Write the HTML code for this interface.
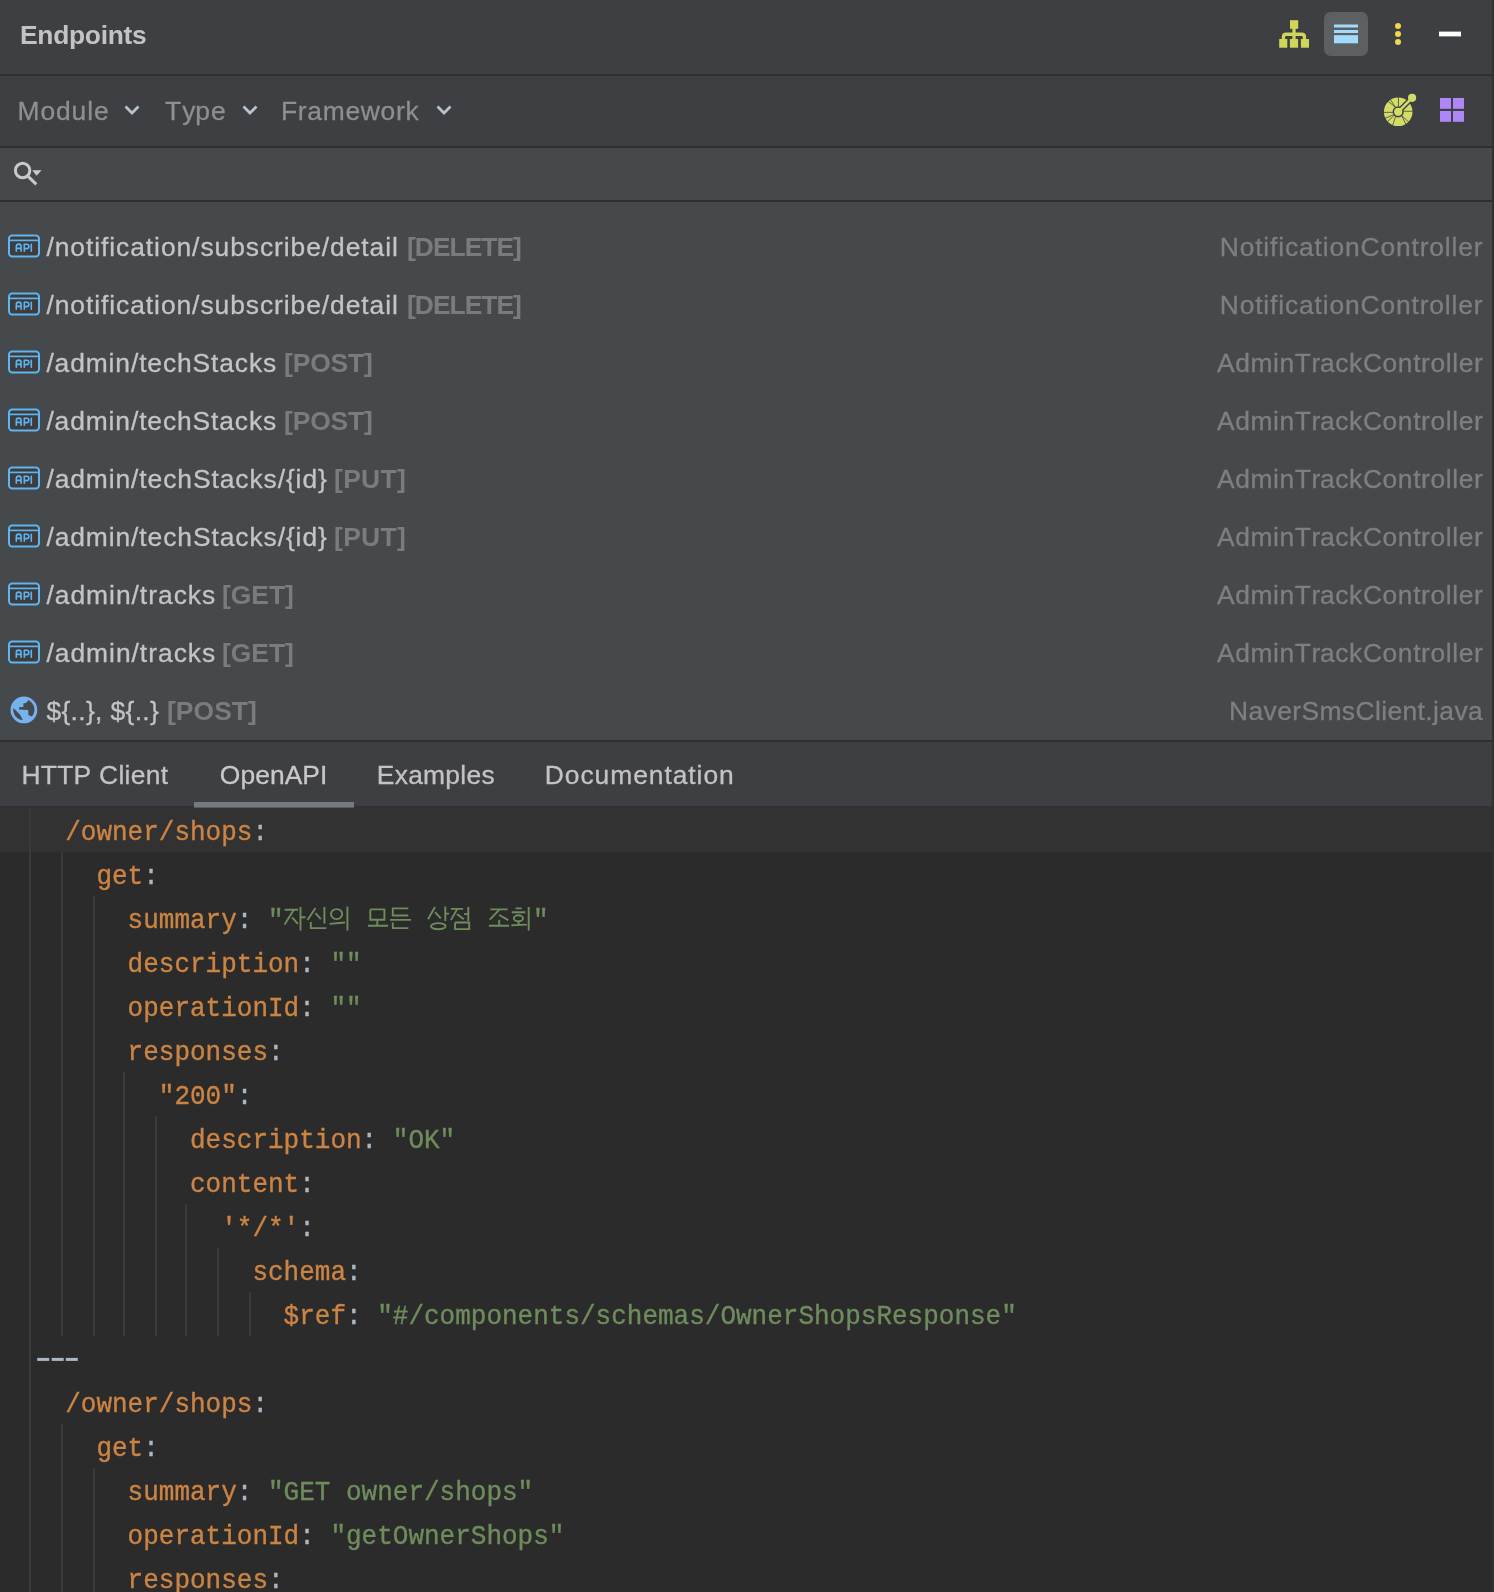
<!DOCTYPE html>
<html><head><meta charset="utf-8">
<style>
html,body{margin:0;padding:0;}
body{width:1494px;height:1592px;position:relative;overflow:hidden;background:#2b2b2b;}
svg{position:absolute;overflow:visible;}
#main{left:0;top:0;will-change:transform;}
#main text{font-family:'Liberation Sans', sans-serif;}
#main text.m{font-family:'Liberation Mono', monospace;font-size:26px;stroke-width:0.35px;}
</style></head><body>
<svg id="main" width="1494" height="1592" viewBox="0 0 1494 1592">
<rect x="0" y="0" width="1494" height="74" fill="#3d3f42"/>
<rect x="0" y="74" width="1494" height="2" fill="#2f2f30"/>
<rect x="0" y="76" width="1494" height="70" fill="#3d3f42"/>
<rect x="0" y="146" width="1494" height="2" fill="#2f2f30"/>
<rect x="0" y="148" width="1494" height="52" fill="#45494b"/>
<rect x="0" y="200" width="1494" height="2" fill="#2f2f30"/>
<rect x="0" y="202" width="1494" height="538" fill="#46494c"/>
<rect x="0" y="740" width="1494" height="2" fill="#2f2f30"/>
<rect x="0" y="742" width="1494" height="64" fill="#3d3f42"/>
<rect x="0" y="806" width="1494" height="786" fill="#2b2b2b"/>
<rect x="0" y="806" width="1494" height="46" fill="#323232"/>
<rect x="194" y="802" width="160" height="5.6" fill="#757a82"/>
<rect x="1492" y="0" width="2" height="1592" fill="#313131"/>
<g fill="#3a3a3a"><rect x="29" y="808" width="2" height="784"/><rect x="61" y="852" width="2" height="484"/><rect x="93" y="896" width="2" height="440"/><rect x="123" y="1072" width="2" height="264"/><rect x="155" y="1116" width="2" height="220"/><rect x="185" y="1204" width="2" height="132"/><rect x="217" y="1248" width="2" height="88"/><rect x="249" y="1292" width="2" height="44"/><rect x="61" y="1424" width="2" height="168"/><rect x="93" y="1468" width="2" height="124"/></g>
<text x="20.00 37.31 53.14 68.97 84.80 100.63 107.67 123.50 132.00" y="44" font-size="26.4" font-weight="700" fill="#c3c3c3">Endpoints</text><text x="17.50 40.41 56.01 71.61 87.21 94.00" y="120" font-size="26.4" font-weight="400" fill="#8f8f8f" stroke="#8f8f8f" stroke-width="0.3">Module</text><text x="165.00 182.28 195.17 211.00" y="120" font-size="26.4" font-weight="400" fill="#8f8f8f" stroke="#8f8f8f" stroke-width="0.3">Type</text><text x="281.00 297.84 307.34 322.73 345.43 360.83 380.60 396.00 405.50" y="120" font-size="26.4" font-weight="400" fill="#8f8f8f" stroke="#8f8f8f" stroke-width="0.3">Framework</text><text x="46.40 54.67 70.29 85.91 94.18 100.98 109.25 116.06 130.19 145.81 154.08 160.89 176.50 192.12 200.39 214.53 230.15 245.76 259.90 274.03 283.76 290.57 306.18 321.80 330.07 345.69 361.31 369.58 385.20 392.00" y="256" font-size="26.4" font-weight="400" fill="#c4c4c4" stroke="#c4c4c4" stroke-width="0.3">/notification/subscribe/detail</text><text x="407.00 414.80 432.88 449.49 464.63 481.25 496.38 513.00" y="256" font-size="26.4" font-weight="700" fill="#7b7b7b">[DELETE]</text><text x="1219.75 1239.66 1255.19 1263.37 1270.09 1278.27 1284.99 1299.03 1314.56 1322.75 1329.46 1344.99 1360.52 1380.43 1395.96 1411.49 1419.67 1429.31 1444.84 1451.56 1458.27 1473.80" y="256" font-size="26.4" font-weight="400" fill="#7f7f7f" stroke="#7f7f7f" stroke-width="0.3">NotificationController</text><text x="46.40 54.67 70.29 85.91 94.18 100.98 109.25 116.06 130.19 145.81 154.08 160.89 176.50 192.12 200.39 214.53 230.15 245.76 259.90 274.03 283.76 290.57 306.18 321.80 330.07 345.69 361.31 369.58 385.20 392.00" y="314" font-size="26.4" font-weight="400" fill="#c4c4c4" stroke="#c4c4c4" stroke-width="0.3">/notification/subscribe/detail</text><text x="407.00 414.80 432.88 449.49 464.63 481.25 496.38 513.00" y="314" font-size="26.4" font-weight="700" fill="#7b7b7b">[DELETE]</text><text x="1219.75 1239.66 1255.19 1263.37 1270.09 1278.27 1284.99 1299.03 1314.56 1322.75 1329.46 1344.99 1360.52 1380.43 1395.96 1411.49 1419.67 1429.31 1444.84 1451.56 1458.27 1473.80" y="314" font-size="26.4" font-weight="400" fill="#7f7f7f" stroke="#7f7f7f" stroke-width="0.3">NotificationController</text><text x="46.40 54.62 70.18 85.74 108.61 115.36 130.93 139.14 147.36 162.92 177.01 192.57 211.06 219.27 234.84 248.92 263.00" y="372" font-size="26.4" font-weight="400" fill="#c4c4c4" stroke="#c4c4c4" stroke-width="0.3">/admin/techStacks</text><text x="284.00 292.66 310.13 330.53 348.01 364.00" y="372" font-size="26.4" font-weight="700" fill="#7b7b7b">[POST]</text><text x="1217.00 1235.21 1250.50 1273.09 1279.57 1294.85 1311.58 1320.00 1335.29 1349.09 1362.90 1382.57 1397.85 1413.14 1421.08 1430.48 1445.77 1452.24 1458.71 1474.00" y="372" font-size="26.4" font-weight="400" fill="#7f7f7f" stroke="#7f7f7f" stroke-width="0.3">AdminTrackController</text><text x="46.40 54.62 70.18 85.74 108.61 115.36 130.93 139.14 147.36 162.92 177.01 192.57 211.06 219.27 234.84 248.92 263.00" y="430" font-size="26.4" font-weight="400" fill="#c4c4c4" stroke="#c4c4c4" stroke-width="0.3">/admin/techStacks</text><text x="284.00 292.66 310.13 330.53 348.01 364.00" y="430" font-size="26.4" font-weight="700" fill="#7b7b7b">[POST]</text><text x="1217.00 1235.21 1250.50 1273.09 1279.57 1294.85 1311.58 1320.00 1335.29 1349.09 1362.90 1382.57 1397.85 1413.14 1421.08 1430.48 1445.77 1452.24 1458.71 1474.00" y="430" font-size="26.4" font-weight="400" fill="#7f7f7f" stroke="#7f7f7f" stroke-width="0.3">AdminTrackController</text><text x="46.40 54.65 70.25 85.84 108.74 115.53 131.12 139.37 147.62 163.22 177.33 192.93 211.45 219.70 235.30 249.41 263.52 277.64 285.89 295.62 302.40 318.00" y="488" font-size="26.4" font-weight="400" fill="#c4c4c4" stroke="#c4c4c4" stroke-width="0.3">/admin/techStacks/{id}</text><text x="334.00 343.15 361.11 380.52 397.00" y="488" font-size="26.4" font-weight="700" fill="#7b7b7b">[PUT]</text><text x="1217.00 1235.21 1250.50 1273.09 1279.57 1294.85 1311.58 1320.00 1335.29 1349.09 1362.90 1382.57 1397.85 1413.14 1421.08 1430.48 1445.77 1452.24 1458.71 1474.00" y="488" font-size="26.4" font-weight="400" fill="#7f7f7f" stroke="#7f7f7f" stroke-width="0.3">AdminTrackController</text><text x="46.40 54.65 70.25 85.84 108.74 115.53 131.12 139.37 147.62 163.22 177.33 192.93 211.45 219.70 235.30 249.41 263.52 277.64 285.89 295.62 302.40 318.00" y="546" font-size="26.4" font-weight="400" fill="#c4c4c4" stroke="#c4c4c4" stroke-width="0.3">/admin/techStacks/{id}</text><text x="334.00 343.15 361.11 380.52 397.00" y="546" font-size="26.4" font-weight="700" fill="#7b7b7b">[PUT]</text><text x="1217.00 1235.21 1250.50 1273.09 1279.57 1294.85 1311.58 1320.00 1335.29 1349.09 1362.90 1382.57 1397.85 1413.14 1421.08 1430.48 1445.77 1452.24 1458.71 1474.00" y="546" font-size="26.4" font-weight="400" fill="#7f7f7f" stroke="#7f7f7f" stroke-width="0.3">AdminTrackController</text><text x="46.40 54.72 70.39 86.05 109.03 115.88 131.55 139.87 148.19 157.96 173.63 187.82 202.00" y="604" font-size="26.4" font-weight="400" fill="#c4c4c4" stroke="#c4c4c4" stroke-width="0.3">/admin/tracks</text><text x="222.00 230.78 251.30 268.89 285.00" y="604" font-size="26.4" font-weight="700" fill="#7b7b7b">[GET]</text><text x="1217.00 1235.21 1250.50 1273.09 1279.57 1294.85 1311.58 1320.00 1335.29 1349.09 1362.90 1382.57 1397.85 1413.14 1421.08 1430.48 1445.77 1452.24 1458.71 1474.00" y="604" font-size="26.4" font-weight="400" fill="#7f7f7f" stroke="#7f7f7f" stroke-width="0.3">AdminTrackController</text><text x="46.40 54.72 70.39 86.05 109.03 115.88 131.55 139.87 148.19 157.96 173.63 187.82 202.00" y="662" font-size="26.4" font-weight="400" fill="#c4c4c4" stroke="#c4c4c4" stroke-width="0.3">/admin/tracks</text><text x="222.00 230.78 251.30 268.89 285.00" y="662" font-size="26.4" font-weight="700" fill="#7b7b7b">[GET]</text><text x="1217.00 1235.21 1250.50 1273.09 1279.57 1294.85 1311.58 1320.00 1335.29 1349.09 1362.90 1382.57 1397.85 1413.14 1421.08 1430.48 1445.77 1452.24 1458.71 1474.00" y="662" font-size="26.4" font-weight="400" fill="#7f7f7f" stroke="#7f7f7f" stroke-width="0.3">AdminTrackController</text><text x="46.40 61.42 70.58 78.26 85.94 95.10 102.78 110.46 125.48 134.64 142.32 150.00" y="720" font-size="26.4" font-weight="400" fill="#c4c4c4" stroke="#c4c4c4" stroke-width="0.3">${..}, ${..}</text><text x="167.00 175.86 193.53 214.13 231.81 248.00" y="720" font-size="26.4" font-weight="700" fill="#7b7b7b">[POST]</text><text x="1229.00 1248.46 1263.54 1277.14 1292.23 1301.42 1319.43 1341.81 1355.41 1374.88 1381.15 1387.41 1402.50 1417.58 1425.31 1433.05 1439.32 1454.40 1468.00" y="720" font-size="26.4" font-weight="400" fill="#7f7f7f" stroke="#7f7f7f" stroke-width="0.3">NaverSmsClient.java</text><text x="21.40 40.75 57.16 73.58 91.47 99.10 118.45 124.60 130.76 145.73 160.70" y="784.3" font-size="26.4" font-weight="400" fill="#c3c3c3" stroke="#c3c3c3" stroke-width="0.3">HTTP Client</text><text x="219.80 240.40 255.15 269.90 284.65 302.32 320.00" y="784.3" font-size="26.4" font-weight="400" fill="#c8c8c8" stroke="#c8c8c8" stroke-width="0.3">OpenAPI</text><text x="376.80 394.68 408.15 423.10 445.36 460.31 466.45 481.40" y="784.3" font-size="26.4" font-weight="400" fill="#c3c3c3" stroke="#c3c3c3" stroke-width="0.3">Examples</text><text x="544.80 564.81 580.43 594.57 610.20 633.13 648.75 664.38 672.66 688.28 696.56 703.38 719.00" y="784.3" font-size="26.4" font-weight="400" fill="#c3c3c3" stroke="#c3c3c3" stroke-width="0.3">Documentation</text>
<g transform="translate(0 840) scale(1 1.08) translate(0 -840)"><text y="840" class="m"><tspan x="65.20 80.80 96.40 112.00 127.60 143.20 158.80 174.40 190.00 205.60 221.20 236.80" fill="#cc8444" stroke="#cc8444">/owner/shops</tspan><tspan x="252.40" fill="#a9b7c6" stroke="#a9b7c6">:</tspan></text></g><g transform="translate(0 884) scale(1 1.08) translate(0 -884)"><text y="884" class="m"><tspan x="96.40 112.00 127.60" fill="#cc8444" stroke="#cc8444">get</tspan><tspan x="143.20" fill="#a9b7c6" stroke="#a9b7c6">:</tspan></text></g><g transform="translate(0 928) scale(1 1.08) translate(0 -928)"><text y="928" class="m"><tspan x="127.60 143.20 158.80 174.40 190.00 205.60 221.20" fill="#cc8444" stroke="#cc8444">summary</tspan><tspan x="236.80" fill="#a9b7c6" stroke="#a9b7c6">:</tspan><tspan x="268.00" fill="#6f8c5d" stroke="#6f8c5d">&quot;</tspan><tspan x="532.90" fill="#6f8c5d" stroke="#6f8c5d">&quot;</tspan></text></g><g transform="translate(0 972) scale(1 1.08) translate(0 -972)"><text y="972" class="m"><tspan x="127.60 143.20 158.80 174.40 190.00 205.60 221.20 236.80 252.40 268.00 283.60" fill="#cc8444" stroke="#cc8444">description</tspan><tspan x="299.20" fill="#a9b7c6" stroke="#a9b7c6">:</tspan><tspan x="330.40 346.00" fill="#6f8c5d" stroke="#6f8c5d">&quot;&quot;</tspan></text></g><g transform="translate(0 1016) scale(1 1.08) translate(0 -1016)"><text y="1016" class="m"><tspan x="127.60 143.20 158.80 174.40 190.00 205.60 221.20 236.80 252.40 268.00 283.60" fill="#cc8444" stroke="#cc8444">operationId</tspan><tspan x="299.20" fill="#a9b7c6" stroke="#a9b7c6">:</tspan><tspan x="330.40 346.00" fill="#6f8c5d" stroke="#6f8c5d">&quot;&quot;</tspan></text></g><g transform="translate(0 1060) scale(1 1.08) translate(0 -1060)"><text y="1060" class="m"><tspan x="127.60 143.20 158.80 174.40 190.00 205.60 221.20 236.80 252.40" fill="#cc8444" stroke="#cc8444">responses</tspan><tspan x="268.00" fill="#a9b7c6" stroke="#a9b7c6">:</tspan></text></g><g transform="translate(0 1104) scale(1 1.08) translate(0 -1104)"><text y="1104" class="m"><tspan x="158.80 174.40 190.00 205.60 221.20" fill="#cc8444" stroke="#cc8444">&quot;200&quot;</tspan><tspan x="236.80" fill="#a9b7c6" stroke="#a9b7c6">:</tspan></text></g><g transform="translate(0 1148) scale(1 1.08) translate(0 -1148)"><text y="1148" class="m"><tspan x="190.00 205.60 221.20 236.80 252.40 268.00 283.60 299.20 314.80 330.40 346.00" fill="#cc8444" stroke="#cc8444">description</tspan><tspan x="361.60" fill="#a9b7c6" stroke="#a9b7c6">:</tspan><tspan x="392.80 408.40 424.00 439.60" fill="#6f8c5d" stroke="#6f8c5d">&quot;OK&quot;</tspan></text></g><g transform="translate(0 1192) scale(1 1.08) translate(0 -1192)"><text y="1192" class="m"><tspan x="190.00 205.60 221.20 236.80 252.40 268.00 283.60" fill="#cc8444" stroke="#cc8444">content</tspan><tspan x="299.20" fill="#a9b7c6" stroke="#a9b7c6">:</tspan></text></g><g transform="translate(0 1236) scale(1 1.08) translate(0 -1236)"><text y="1236" class="m"><tspan x="221.20 236.80 252.40 268.00 283.60" fill="#cc8444" stroke="#cc8444">&#x27;*/*&#x27;</tspan><tspan x="299.20" fill="#a9b7c6" stroke="#a9b7c6">:</tspan></text></g><g transform="translate(0 1280) scale(1 1.08) translate(0 -1280)"><text y="1280" class="m"><tspan x="252.40 268.00 283.60 299.20 314.80 330.40" fill="#cc8444" stroke="#cc8444">schema</tspan><tspan x="346.00" fill="#a9b7c6" stroke="#a9b7c6">:</tspan></text></g><g transform="translate(0 1324) scale(1 1.08) translate(0 -1324)"><text y="1324" class="m"><tspan x="283.60 299.20 314.80 330.40" fill="#cc8444" stroke="#cc8444">$ref</tspan><tspan x="346.00" fill="#a9b7c6" stroke="#a9b7c6">:</tspan><tspan x="377.20 392.80 408.40 424.00 439.60 455.20 470.80 486.40 502.00 517.60 533.20 548.80 564.40 580.00 595.60 611.20 626.80 642.40 658.00 673.60 689.20 704.80 720.40 736.00 751.60 767.20 782.80 798.40 814.00 829.60 845.20 860.80 876.40 892.00 907.60 923.20 938.80 954.40 970.00 985.60 1001.20" fill="#6f8c5d" stroke="#6f8c5d">&quot;#/components/schemas/OwnerShopsResponse&quot;</tspan></text></g><g transform="translate(0 1412) scale(1 1.08) translate(0 -1412)"><text y="1412" class="m"><tspan x="65.20 80.80 96.40 112.00 127.60 143.20 158.80 174.40 190.00 205.60 221.20 236.80" fill="#cc8444" stroke="#cc8444">/owner/shops</tspan><tspan x="252.40" fill="#a9b7c6" stroke="#a9b7c6">:</tspan></text></g><g transform="translate(0 1456) scale(1 1.08) translate(0 -1456)"><text y="1456" class="m"><tspan x="96.40 112.00 127.60" fill="#cc8444" stroke="#cc8444">get</tspan><tspan x="143.20" fill="#a9b7c6" stroke="#a9b7c6">:</tspan></text></g><g transform="translate(0 1500) scale(1 1.08) translate(0 -1500)"><text y="1500" class="m"><tspan x="127.60 143.20 158.80 174.40 190.00 205.60 221.20" fill="#cc8444" stroke="#cc8444">summary</tspan><tspan x="236.80" fill="#a9b7c6" stroke="#a9b7c6">:</tspan><tspan x="268.00 283.60 299.20 314.80 330.40 346.00 361.60 377.20 392.80 408.40 424.00 439.60 455.20 470.80 486.40 502.00 517.60" fill="#6f8c5d" stroke="#6f8c5d">&quot;GET owner/shops&quot;</tspan></text></g><g transform="translate(0 1544) scale(1 1.08) translate(0 -1544)"><text y="1544" class="m"><tspan x="127.60 143.20 158.80 174.40 190.00 205.60 221.20 236.80 252.40 268.00 283.60" fill="#cc8444" stroke="#cc8444">operationId</tspan><tspan x="299.20" fill="#a9b7c6" stroke="#a9b7c6">:</tspan><tspan x="330.40 346.00 361.60 377.20 392.80 408.40 424.00 439.60 455.20 470.80 486.40 502.00 517.60 533.20 548.80" fill="#6f8c5d" stroke="#6f8c5d">&quot;getOwnerShops&quot;</tspan></text></g><g transform="translate(0 1588) scale(1 1.08) translate(0 -1588)"><text y="1588" class="m"><tspan x="127.60 143.20 158.80 174.40 190.00 205.60 221.20 236.80 252.40" fill="#cc8444" stroke="#cc8444">responses</tspan><tspan x="268.00" fill="#a9b7c6" stroke="#a9b7c6">:</tspan></text></g><g fill="#a9b7c6"><rect x="37.2" y="1357.9" width="12" height="3"/><rect x="51.7" y="1357.9" width="12" height="3"/><rect x="65.8" y="1357.9" width="12" height="3"/></g>
<g fill="none" stroke="#6f8c5d" stroke-width="1.9" stroke-linejoin="miter"><path d="M284.6 909.8 L298.1 909.8 M293.5 910.3 L284.6 924.4 M292.1 917.3 L297.9 923.9 M300.5 907.0 L300.5 930.5 M300.5 917.3 L305.6 917.3 M315.5 908.0 L307.5 920.1 M315.5 913.1 L320.8 919.2 M324.4 907.0 L324.4 923.4 M310.8 922.0 L310.8 928.1 L326.3 928.1 M329.5 923.9 L345.0 922.5 M347.4 906.6 L347.4 930.5 M370.3 909.4 L384.4 909.4 L384.4 919.7 L370.3 919.7 L370.3 909.4 M377.3 919.7 L377.3 925.8 M368.0 925.8 L388.1 925.8 M408.3 908.4 L392.8 908.4 L392.8 915.5 L408.3 915.5 M390.0 919.9 L411.1 919.9 M392.8 922.5 L392.8 928.1 L408.3 928.1 M435.0 907.0 L428.0 919.2 M435.0 912.2 L440.8 918.3 M445.3 906.6 L445.3 921.1 M445.3 913.6 L449.0 913.6 M450.9 908.9 L463.1 908.9 M457.0 909.4 L450.9 920.1 M457.0 914.1 L463.8 919.2 M468.3 907.0 L468.3 921.1 M464.0 914.1 L468.3 914.1 M455.1 922.5 L469.2 922.5 L469.2 929.1 L455.1 929.1 L455.1 922.5 M490.3 909.4 L507.6 909.4 M499.2 909.8 L489.8 919.7 M499.2 915.0 L508.3 920.1 M499.2 919.7 L499.2 925.8 M488.9 925.8 L509.0 925.8 M515.6 908.4 L521.7 908.4 M511.8 912.2 L525.4 912.2 M518.6 921.4 L518.6 924.8 M511.4 925.3 L526.8 924.6 M528.7 907.0 L528.7 930.5"/><ellipse cx="336.6" cy="914.1" rx="5.6" ry="5.0"/><ellipse cx="438.3" cy="926.2" rx="7.3" ry="3.1"/><ellipse cx="518.4" cy="918.3" rx="4.6" ry="3.0"/></g>
</svg>
<svg style="left:0;top:0" width="1494" height="60">
<g fill="#cfd65a">
<rect x="1290" y="20.2" width="8.2" height="8.6"/>
<rect x="1279.2" y="39" width="8.1" height="8.7"/>
<rect x="1289.9" y="39" width="8.2" height="8.7"/>
<rect x="1300.9" y="39" width="8.1" height="8.7"/>
</g>
<path d="M1294 28 V39.5 M1283.45 39.5 V37 Q1283.45 34.25 1286.2 34.25 H1301.7 Q1304.45 34.25 1304.45 37 V39.5" fill="none" stroke="#cfd65a" stroke-width="3.3"/>
<rect x="1324" y="12" width="44" height="44" rx="6.5" fill="#5d6063"/>
<g fill="#a2dcfc">
<rect x="1334" y="24.5" width="24" height="3"/>
<rect x="1334" y="30" width="24" height="3"/>
<rect x="1334" y="35.2" width="24" height="8.1"/>
</g>
<g fill="#f3d54e">
<circle cx="1398" cy="26" r="3"/><circle cx="1398" cy="34" r="3"/><circle cx="1398" cy="42" r="3"/>
</g>
<rect x="1439" y="31.6" width="22" height="4.8" fill="#ffffff"/>
</svg>
<svg style="left:0;top:0" width="1494" height="140">
<circle cx="1398.2" cy="111.8" r="14.3" fill="#d4dc68"/>
<path d="M1398.47 97.00 L1398.47 106.51 M1383.41 112.35 L1392.93 112.35 M1412.99 111.28 L1403.47 111.28 M1387.90 101.17 L1395.44 107.28 M1390.25 99.32 L1395.47 107.26 M1384.98 118.45 L1393.73 114.64 M1387.33 121.85 L1394.22 115.29 M1392.51 125.46 L1395.68 116.46 M1405.97 124.40 L1401.67 115.80 M1408.85 122.08 L1401.75 115.73" stroke="#3d3f42" stroke-width="0.9" fill="none" opacity="0.85"/>
<path d="M1398.2 111.8 L1412.1 97.8" stroke="#3d3f42" stroke-width="5.2"/>
<circle cx="1398.2" cy="111.8" r="5.6" fill="#3d3f42"/>
<circle cx="1412.1" cy="97.8" r="5.2" fill="#3d3f42"/>
<path d="M1398.2 111.8 L1412.1 97.8" stroke="#d4dc68" stroke-width="2.6"/>
<circle cx="1398.2" cy="111.8" r="4.1" fill="#d4dc68"/>
<circle cx="1412.1" cy="97.8" r="4.1" fill="#d4dc68"/>
<g fill="#ae86f6">
<rect x="1440" y="98" width="11" height="10.8"/>
<rect x="1453" y="98" width="11" height="10.8"/>
<rect x="1440" y="111" width="11" height="10.8"/>
<rect x="1453" y="111" width="11" height="10.8"/>
</g>
<g fill="none" stroke="#b8c3cb" stroke-width="2.8" stroke-linejoin="miter">
<path d="M125.5 106.6 L132 113.1 L138.5 106.6"/>
<path d="M243.5 106.6 L250 113.1 L256.5 106.6"/>
<path d="M437.5 106.6 L444 113.1 L450.5 106.6"/>
</g>
</svg>
<svg style="left:0;top:140px" width="60" height="60">
<g transform="translate(0,-140)">
<circle cx="22.6" cy="170.5" r="7.2" fill="none" stroke="#cacaca" stroke-width="3"/>
<path d="M28.3 176.7 L36.3 184.4" stroke="#cacaca" stroke-width="3"/>
<path d="M32.2 170.2 L41.6 170.2 L36.6 175.8 Z" fill="#cacaca"/>
</g></svg>
<svg style="left:0;top:225px" width="50" height="40"><g transform="translate(0,-225)">
<rect x="9" y="235.4" width="30" height="21" rx="3.2" fill="#3e3c3d" stroke="#5db5f2" stroke-width="2"/>
<path d="M9.5 240.4 H38.5" stroke="#5db5f2" stroke-width="1.7"/>
<path d="M16.3 251.2 V246.4 Q16.3 244.1 18.7 244.1 Q21.1 244.1 21.1 246.4 V251.2 M16.3 248.4 H21.1 M24.3 251.2 V244.2 H26.6 Q28.9 244.2 28.9 246.4 Q28.9 248.6 26.6 248.6 H24.3 M31.3 244.2 V251.2" fill="none" stroke="#5db5f2" stroke-width="1.6" stroke-linecap="round" stroke-linejoin="round"/>
</g></svg>
<svg style="left:0;top:283px" width="50" height="40"><g transform="translate(0,-225)">
<rect x="9" y="235.4" width="30" height="21" rx="3.2" fill="#3e3c3d" stroke="#5db5f2" stroke-width="2"/>
<path d="M9.5 240.4 H38.5" stroke="#5db5f2" stroke-width="1.7"/>
<path d="M16.3 251.2 V246.4 Q16.3 244.1 18.7 244.1 Q21.1 244.1 21.1 246.4 V251.2 M16.3 248.4 H21.1 M24.3 251.2 V244.2 H26.6 Q28.9 244.2 28.9 246.4 Q28.9 248.6 26.6 248.6 H24.3 M31.3 244.2 V251.2" fill="none" stroke="#5db5f2" stroke-width="1.6" stroke-linecap="round" stroke-linejoin="round"/>
</g></svg>
<svg style="left:0;top:341px" width="50" height="40"><g transform="translate(0,-225)">
<rect x="9" y="235.4" width="30" height="21" rx="3.2" fill="#3e3c3d" stroke="#5db5f2" stroke-width="2"/>
<path d="M9.5 240.4 H38.5" stroke="#5db5f2" stroke-width="1.7"/>
<path d="M16.3 251.2 V246.4 Q16.3 244.1 18.7 244.1 Q21.1 244.1 21.1 246.4 V251.2 M16.3 248.4 H21.1 M24.3 251.2 V244.2 H26.6 Q28.9 244.2 28.9 246.4 Q28.9 248.6 26.6 248.6 H24.3 M31.3 244.2 V251.2" fill="none" stroke="#5db5f2" stroke-width="1.6" stroke-linecap="round" stroke-linejoin="round"/>
</g></svg>
<svg style="left:0;top:399px" width="50" height="40"><g transform="translate(0,-225)">
<rect x="9" y="235.4" width="30" height="21" rx="3.2" fill="#3e3c3d" stroke="#5db5f2" stroke-width="2"/>
<path d="M9.5 240.4 H38.5" stroke="#5db5f2" stroke-width="1.7"/>
<path d="M16.3 251.2 V246.4 Q16.3 244.1 18.7 244.1 Q21.1 244.1 21.1 246.4 V251.2 M16.3 248.4 H21.1 M24.3 251.2 V244.2 H26.6 Q28.9 244.2 28.9 246.4 Q28.9 248.6 26.6 248.6 H24.3 M31.3 244.2 V251.2" fill="none" stroke="#5db5f2" stroke-width="1.6" stroke-linecap="round" stroke-linejoin="round"/>
</g></svg>
<svg style="left:0;top:457px" width="50" height="40"><g transform="translate(0,-225)">
<rect x="9" y="235.4" width="30" height="21" rx="3.2" fill="#3e3c3d" stroke="#5db5f2" stroke-width="2"/>
<path d="M9.5 240.4 H38.5" stroke="#5db5f2" stroke-width="1.7"/>
<path d="M16.3 251.2 V246.4 Q16.3 244.1 18.7 244.1 Q21.1 244.1 21.1 246.4 V251.2 M16.3 248.4 H21.1 M24.3 251.2 V244.2 H26.6 Q28.9 244.2 28.9 246.4 Q28.9 248.6 26.6 248.6 H24.3 M31.3 244.2 V251.2" fill="none" stroke="#5db5f2" stroke-width="1.6" stroke-linecap="round" stroke-linejoin="round"/>
</g></svg>
<svg style="left:0;top:515px" width="50" height="40"><g transform="translate(0,-225)">
<rect x="9" y="235.4" width="30" height="21" rx="3.2" fill="#3e3c3d" stroke="#5db5f2" stroke-width="2"/>
<path d="M9.5 240.4 H38.5" stroke="#5db5f2" stroke-width="1.7"/>
<path d="M16.3 251.2 V246.4 Q16.3 244.1 18.7 244.1 Q21.1 244.1 21.1 246.4 V251.2 M16.3 248.4 H21.1 M24.3 251.2 V244.2 H26.6 Q28.9 244.2 28.9 246.4 Q28.9 248.6 26.6 248.6 H24.3 M31.3 244.2 V251.2" fill="none" stroke="#5db5f2" stroke-width="1.6" stroke-linecap="round" stroke-linejoin="round"/>
</g></svg>
<svg style="left:0;top:573px" width="50" height="40"><g transform="translate(0,-225)">
<rect x="9" y="235.4" width="30" height="21" rx="3.2" fill="#3e3c3d" stroke="#5db5f2" stroke-width="2"/>
<path d="M9.5 240.4 H38.5" stroke="#5db5f2" stroke-width="1.7"/>
<path d="M16.3 251.2 V246.4 Q16.3 244.1 18.7 244.1 Q21.1 244.1 21.1 246.4 V251.2 M16.3 248.4 H21.1 M24.3 251.2 V244.2 H26.6 Q28.9 244.2 28.9 246.4 Q28.9 248.6 26.6 248.6 H24.3 M31.3 244.2 V251.2" fill="none" stroke="#5db5f2" stroke-width="1.6" stroke-linecap="round" stroke-linejoin="round"/>
</g></svg>
<svg style="left:0;top:631px" width="50" height="40"><g transform="translate(0,-225)">
<rect x="9" y="235.4" width="30" height="21" rx="3.2" fill="#3e3c3d" stroke="#5db5f2" stroke-width="2"/>
<path d="M9.5 240.4 H38.5" stroke="#5db5f2" stroke-width="1.7"/>
<path d="M16.3 251.2 V246.4 Q16.3 244.1 18.7 244.1 Q21.1 244.1 21.1 246.4 V251.2 M16.3 248.4 H21.1 M24.3 251.2 V244.2 H26.6 Q28.9 244.2 28.9 246.4 Q28.9 248.6 26.6 248.6 H24.3 M31.3 244.2 V251.2" fill="none" stroke="#5db5f2" stroke-width="1.6" stroke-linecap="round" stroke-linejoin="round"/>
</g></svg>
<svg style="left:0;top:685px" width="50" height="50"><g transform="translate(0,-685)">
<circle cx="23.9" cy="709.9" r="13.4" fill="#74b3f0"/>
<path d="M13.40 708.10 L20.10 714.80 L22.80 720.10 A10.4 10.4 0 0 1 13.40 708.10 Z" fill="#46494c"/>
<path d="M28.10 700.00 Q27.50 702.70 25.50 703.00 L23.40 703.40 L23.40 706.90 L19.10 707.30 L19.10 709.50 L28.20 710.10 L28.40 715.10 L31.80 716.50 A10.4 10.4 0 0 0 28.10 700.00 Z" fill="#46494c"/>
</g></svg>
</body></html>
